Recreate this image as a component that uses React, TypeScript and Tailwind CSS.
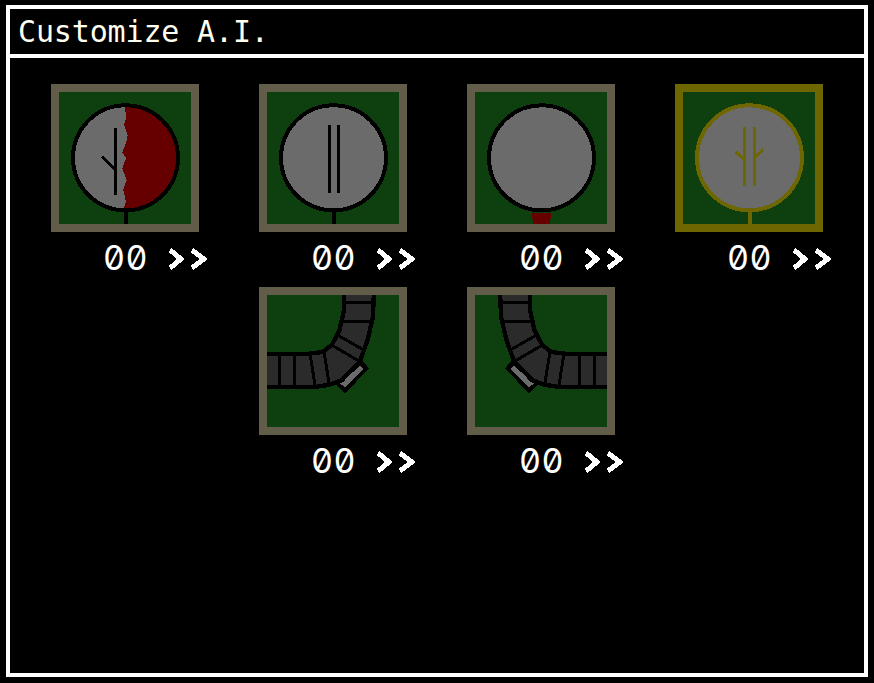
const FRAME = "#625d48";
const YELLOW = "#6e6600";
const GRAY = "#6b6b6b";
const RED = "#660000";

function Head({ color, children }: { color: string; children?: React.ReactNode }) {
  return (
    <>
      {children}
      <circle cx="66.5" cy="65.8" r="52.5" fill="none" stroke={color} strokeWidth="4" />
      <rect x="65" y="120" width="4" height="12" fill={color} />
    </>
  );
}

function HeadLeft() {
  return (
    <Head color="#000">
      <circle cx="66.5" cy="65.8" r="52.5" fill={GRAY} />
      <path
        d="M66 13.3 A52.5 52.5 0 0 1 64.3 118.3 L64.3 117 L67 109.7 L64.3 98 L67.7 88 L63.3 76.3 L67 66.3 L63.3 60.3 L67 51.3 L68.7 43 L65 33 L67 26.3 Z"
        fill={RED}
      />
      <path d="M56.5 36V103M43.3 64.7L56.5 78" fill="none" stroke="#000" strokeWidth="3" />
    </Head>
  );
}

function HeadFront() {
  return (
    <Head color="#000">
      <circle cx="66.5" cy="65.8" r="52.5" fill={GRAY} />
      <path d="M62.7 33V101M71.7 33V101" fill="none" stroke="#000" strokeWidth="3" />
    </Head>
  );
}

function HeadBack() {
  return (
    <>
      <circle cx="66.5" cy="65.8" r="52.5" fill={GRAY} stroke="#000" strokeWidth="4" />
      <path d="M57 120.7H76V126.7H75V132H58.3V126.7H57Z" fill={RED} />
    </>
  );
}

function HeadRight() {
  return (
    <>
      <circle cx="66.5" cy="65.8" r="52.5" fill={GRAY} stroke={YELLOW} strokeWidth="4" />
      <rect x="65" y="120" width="4" height="12" fill={YELLOW} />
      <path
        d="M61.5 34.5V94M71.5 34.5V94M52.7 59.7L61.5 68M80.3 57.3L71.5 66"
        fill="none"
        stroke={YELLOW}
        strokeWidth="3"
      />
    </>
  );
}

function Arm() {
  return (
    <g transform="translate(-17 -15) scale(0.33333)">
      <path d="M335 240L356 266L285 338L258 312Z" fill="#000" stroke="#000" strokeWidth="3" />
      <path d="M330 258L340 268L285 322L270 310Z" fill={GRAY} />
      <path
        d="M282 30L372 30L369 110L354 175L330 245L276 300L240 314L195 321L30 321L30 222L170 222L218 216L245 195L268 152L282 90Z"
        fill="#2b2b2b"
        stroke="#000"
        strokeWidth="13"
      />
      <path
        d="M285 68H370M275 125H362M262 165L338 208M245 195L330 245M222 215L238 315M180 220L196 322M135 225V320M90 225V320"
        fill="none"
        stroke="#000"
        strokeWidth="9"
      />
    </g>
  );
}

type Item = { key: string; color: string; art: React.ReactNode };

const items: Item[] = [
  { key: "head-left", color: FRAME, art: <HeadLeft /> },
  { key: "head-front", color: FRAME, art: <HeadFront /> },
  { key: "head-back", color: FRAME, art: <HeadBack /> },
  { key: "head-right", color: YELLOW, art: <HeadRight /> },
  { key: "arm-left", color: FRAME, art: <Arm /> },
  {
    key: "arm-right",
    color: FRAME,
    art: <g transform="translate(132 0) scale(-1 1)"><Arm /></g>,
  },
];

function Cell({ item }: { item: Item }) {
  return (
    <div className="w-[208px] h-[203px] flex flex-col items-center">
      <div
        className="w-[148px] h-[148px] border-8 bg-[#0e3f0e] shrink-0"
        style={{ borderColor: item.color }}
      >
        <svg width="132" height="132" viewBox="0 0 132 132" shapeRendering="crispEdges" className="block">
          {item.art}
        </svg>
      </div>
      <div className="w-[208px] flex items-center pl-[82px] h-[52px]">
        <span className="text-white text-[34px] leading-none font-['Inter',sans-serif] font-normal tabular-nums [font-feature-settings:'zero','tnum'] w-[44px] tracking-[0.5px]">
          00
        </span>
        <svg width="40" height="24" viewBox="0 0 40 24" className="ml-[20px] mt-[1px] block" shapeRendering="crispEdges">
          <path d="M3 3L14 12L3 21M25 3L37 12L25 21" fill="none" stroke="#fff" strokeWidth="5" />
        </svg>
      </div>
    </div>
  );
}

export default function App() {
  return (
    <div className="w-[874px] h-[683px] bg-black pt-[5px] pl-[6px] overflow-hidden">
      <div className="w-[862px] h-[672px] border-4 border-white flex flex-col">
        <div className="h-[49px] border-b-4 border-white px-2 pt-[1px] flex items-center shrink-0">
          <h1 className="text-[#fffff0] text-[30px] leading-none tracking-[-0.15px] font-['DejaVu_Sans_Mono',monospace]">
            Customize A.I.
          </h1>
        </div>
        <div className="flex flex-wrap justify-center content-start pt-[26px]">
          {items.map((item) => (
            <Cell key={item.key} item={item} />
          ))}
        </div>
      </div>
    </div>
  );
}
